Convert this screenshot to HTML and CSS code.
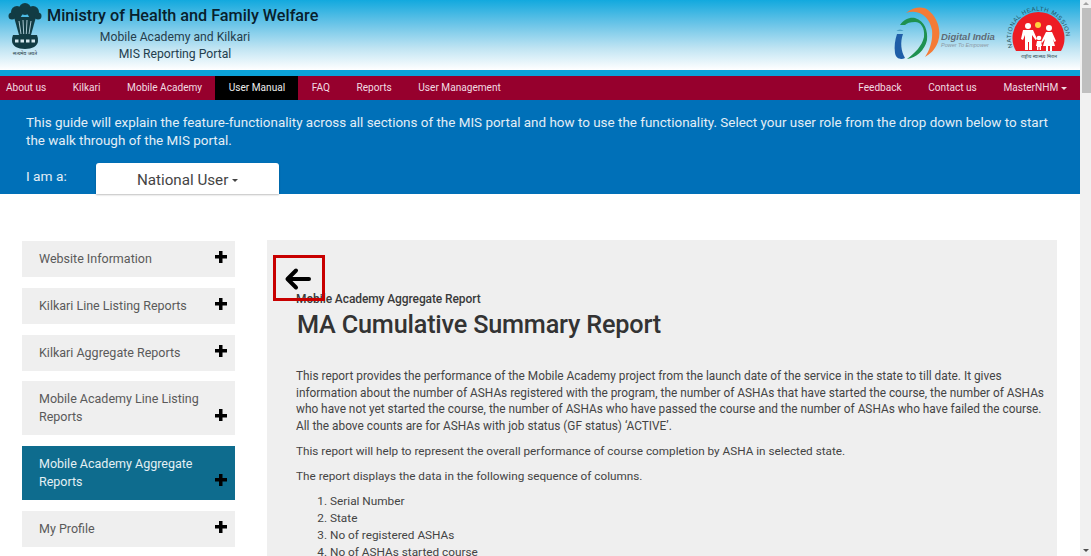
FILE: index.html
```html
<!DOCTYPE html>
<html lang="en">
<head>
<meta charset="utf-8">
<title>MIS Reporting Portal</title>
<link rel="stylesheet" href="styles.css">
</head>
<body>
<div class="page">
  <header class="masthead">
    <div class="brand">
      <svg class="emblem" viewBox="0 0 34 56" width="34" height="56" aria-hidden="true">
        <g fill="#123c44">
          <circle cx="17" cy="7" r="6"/><circle cx="9" cy="10" r="6"/><circle cx="25" cy="10" r="6"/>
          <circle cx="4" cy="14" r="3.500"/><circle cx="30" cy="14" r="3.500"/>
          <path d="M6 15h22l-5 18H11z"/>
          <path d="M5 33h24a13 13 0 0 1 1 6c0 5-6 8-13 8S4 44 4 39a13 13 0 0 1 1-6z"/>
        </g>
        <path d="M11 19l2 13M15 18l.7 14M19 18l-.7 14M23 19l-2 13" stroke="#b8d5df" stroke-width=".9"/>
        <path d="M7 39h20" stroke="#d5e7ee" stroke-width="3" stroke-dasharray="3.500 2"/>
        <text class="emblem-text" x="17" y="53" text-anchor="middle">सत्यमेव जयते</text>
      </svg>
      <div class="titles">
        <h1 class="ministry">Ministry of Health and Family Welfare</h1>
        <p class="sub sub-first">Mobile Academy and Kilkari</p>
        <p class="sub">MIS Reporting Portal</p>
      </div>
    </div>
    <div class="logos">
      <div class="di">
        <svg viewBox="0 0 48 56" width="48" height="56" aria-hidden="true">
          <path d="M14 9C22 3 30 2 36 6c9 7 14 20 10 32-3 8-8 12-13 15 5-7 8-17 7-27C38 14 28 4 14 9z" fill="#f47b36"/>
          <path d="M8 21c4-6 10-8 15-7 10 3 13 13 12 22-2 10-11 18-20 19 8-6 15-13 17-22 1-9-3-15-9-15-5 0-8 1-10 3z" fill="#1e9150"/>
          <path d="M5 30h6c-3 8-2 17 2 24-4 2-9 1-10-5-1-7 0-13 2-19z" fill="#1f5ea8"/>
          <path d="M4.500 27a4 3 0 0 1 7 0z" fill="#4aa0c8"/>
        </svg>
        <div class="di-text"><span class="di-name">Digital India</span><span class="di-tag">Power To Empower</span></div>
      </div>
      <svg class="nhm" viewBox="0 0 70 56" width="70" height="56" role="img">
        <defs><path id="arc" d="M7.900 44.300A27.500 27.500 0 1 1 59.100 44.300"/></defs>
        <text class="nhm-ring"><textPath href="#arc" startOffset="1%">NATIONAL HEALTH MISSION</textPath></text>
        <path d="M11 47A26 26 0 1 1 56 47z" fill="#ed1c24"/>
        <circle cx="33" cy="21" r="3" fill="#ffd23f"/>
        <g fill="#fff">
          <circle cx="23" cy="22" r="3"/><path d="M18 26h10l4 9-1.500 1-3.500-5v15h-3v-8h-1v8h-3V31l-2 5-2-1z"/>
          <circle cx="44" cy="24" r="3"/><path d="M41 28h6l4 9-1.500 1-1.500-3 2 7h-3v5h-2v-5h-2v5h-2v-5h-3l2-7-3 4-1-1z"/>
          <circle cx="34" cy="34" r="2.300"/><path d="M32 37h4l1 5h-1v4h-1.500v-3h-1v3H32v-4h-1z"/>
        </g>
        <text class="nhm-hindi" x="34" y="54" text-anchor="middle">राष्ट्रीय स्वास्थ्य मिशन</text>
      </svg>
    </div>
  </header>
  <nav class="navbar">
    <ul class="nav-group">
      <li class="nav-item">About us</li>
      <li class="nav-item">Kilkari</li>
      <li class="nav-item">Mobile Academy</li>
      <li class="nav-item nav-active">User Manual</li>
      <li class="nav-item">FAQ</li>
      <li class="nav-item">Reports</li>
      <li class="nav-item">User Management</li>
    </ul>
    <ul class="nav-group">
      <li class="nav-item">Feedback</li>
      <li class="nav-item">Contact us</li>
      <li class="nav-item">MasterNHM <span class="caret"></span></li>
    </ul>
  </nav>
  <section class="intro">
    <p class="intro-text">This guide will explain the feature-functionality across all sections of the MIS portal and how to use the functionality. Select your user role from the drop down below to start the walk through of the MIS portal.</p>
    <div class="role">
      <span class="role-label">I am a:</span>
      <button class="role-btn" type="button">National User <span class="caret caret-dark"></span></button>
    </div>
  </section>
  <main class="content">
    <aside class="side">
      <div class="side-item"><span>Website Information</span><b class="plus"></b></div>
      <div class="side-item"><span>Kilkari Line Listing Reports</span><b class="plus"></b></div>
      <div class="side-item"><span>Kilkari Aggregate Reports</span><b class="plus"></b></div>
      <div class="side-item side-two"><span>Mobile Academy Line Listing Reports</span><b class="plus plus-low"></b></div>
      <div class="side-item side-two side-active"><span>Mobile Academy Aggregate Reports</span><b class="plus plus-low"></b></div>
      <div class="side-item"><span>My Profile</span><b class="plus"></b></div>
    </aside>
    <article class="panel">
      <div class="back">
        <svg viewBox="0 0 28 24" width="28" height="24" aria-hidden="true">
          <path d="M25 12H4M12 3.500 3.500 12 12 20.500" fill="none" stroke="#000" stroke-width="4" stroke-linecap="round" stroke-linejoin="round"/>
        </svg>
      </div>
      <div class="eyebrow">Mobile Academy Aggregate Report</div>
      <h2 class="report-title">MA Cumulative Summary Report</h2>
      <p class="para para-first">This report provides the performance of the Mobile Academy project from the launch date of the service in the state to till date. It gives information about the number of ASHAs registered with the program, the number of ASHAs that have started the course, the number of ASHAs who have not yet started the course, the number of ASHAs who have passed the course and the number of ASHAs who have failed the course. All the above counts are for ASHAs with job status (GF status) ‘ACTIVE’.</p>
      <p class="para">This report will help to represent the overall performance of course completion by ASHA in selected state.</p>
      <p class="para para-last">The report displays the data in the following sequence of columns.</p>
      <ol class="cols">
        <li>Serial Number</li>
        <li>State</li>
        <li>No of registered ASHAs</li>
        <li>No of ASHAs started course</li>
      </ol>
    </article>
  </main>
</div>
<div class="scrollbar">
  <span class="sb-arrow sb-up"></span>
  <span class="sb-thumb"></span>
  <span class="sb-arrow sb-down"></span>
</div>
</body>
</html>
```
FILE: styles.css
```css
* { box-sizing: border-box; }
html, body { margin: 0; height: 556px; overflow: hidden; background: #fff; }
body { display: flex; font-family: Roboto, "Liberation Sans", sans-serif; color: #444; }
.page { width: 1080px; flex: none; height: 556px; overflow: hidden; }

.masthead {
  height: 76px;
  border-bottom: 6px solid #0ba3d9;
  background: linear-gradient(to bottom, #12a9de 0%, #6cc5e8 35%, #c2e5f3 70%, #fff 100%);
  display: flex;
  justify-content: space-between;
}
.brand { display: flex; padding: 2px 0 0 8px; }
.emblem { flex: none; }
.emblem-text { font: 5px "Noto Sans", "DejaVu Sans", sans-serif; fill: #24383e; }
.titles { width: 272px; margin-left: 5px; text-align: center; }
.ministry { margin: 4px 0 0; font-size: 16.200px; line-height: 20px; font-weight: 500; color: #07202c; white-space: nowrap; text-align: left; }
.sub { margin: 0; font-size: 12.200px; line-height: 17px; color: #24404e; padding-right: 16px; }
.sub-first { margin-top: 3px; }

.logos { display: flex; align-items: flex-start; }
.di { display: flex; width: 113px; padding-top: 4px; }
.di-text { display: flex; flex-direction: column; margin-top: 27px; margin-left: 1px; white-space: nowrap; }
.di-name { font: italic 700 9.500px/11px "Liberation Sans", sans-serif; color: #5d6a75; }
.di-tag { font: italic 400 5.500px/7px "Liberation Sans", sans-serif; color: #8b98a2; }
.nhm { margin: 4px 5px 0 0; flex: none; }
.nhm-ring { font: 6px "Liberation Sans", sans-serif; letter-spacing: .55px; fill: #24505c; }
.nhm-hindi { font: 5px "Noto Sans", "DejaVu Sans", sans-serif; fill: #304f58; }

.navbar {
  height: 24px;
  background: #96002d;
  display: flex;
  justify-content: space-between;
}
.nav-group { display: flex; list-style: none; margin: 0; padding: 0; }
.nav-item { padding: 0 13.300px; font-size: 10.100px; line-height: 24px; color: #f1dbe1; white-space: nowrap; }
.nav-group:first-child .nav-item:first-child { padding-left: 6px; }
.nav-active { background: #000; color: #ececec; }
.caret { display: inline-block; width: 0; height: 0; border: 3px solid transparent; border-top-color: #f1dbe1; border-bottom: 0; vertical-align: middle; }
.caret-dark { border-top-color: #444; }

.intro { height: 94px; background: #0070b8; padding: 14px 26px 0; color: #e3eef6; }
.intro-text { margin: 0; font-size: 13.450px; line-height: 18px; width: 1030px; }
.role { display: flex; align-items: flex-start; margin-top: 13px; }
.role-label { font-size: 13.700px; line-height: 20px; margin-top: 3px; width: 70px; }
.role-btn {
  width: 183px;
  height: 31px;
  padding-top: 3px;
  border: 0;
  background: #fff;
  border-radius: 3px 3px 0 0;
  box-shadow: 0 1px 2px rgba(0, 0, 0, .25);
  font-family: inherit;
  font-size: 15.200px;
  color: #444;
}

.content { display: flex; padding: 46px 23px 0 22px; }
.side { width: 213px; flex: none; margin-right: 32px; padding-top: 1px; }
.side-item {
  position: relative;
  background: #efefef;
  padding: 9px 34px 9px 17px;
  min-height: 36px;
  margin-bottom: 10.800px;
  font-size: 12.500px;
  line-height: 18px;
  color: #5a5a5a;
}
.side-two { height: 54px; }
.side-active { background: #0e6c8e; color: #e4f0f4; }
.plus { position: absolute; right: 8px; top: 10px; width: 12px; height: 12px; background: linear-gradient(#000, #000) center / 12px 3.500px no-repeat, linear-gradient(#000, #000) center / 3.500px 12px no-repeat; }
.plus-low { top: 28px; }

.panel { position: relative; flex: 1; background: #efefef; height: 400px; padding: 52px 12px 0 29px; }
.back {
  position: absolute;
  left: 6px;
  top: 15px;
  width: 52px;
  height: 46px;
  border: 3px solid #c80000;
  padding: 9px 0 0 8px;
  line-height: 0;
}
.eyebrow { font-size: 12px; line-height: 14px; color: #3a3a3a; font-weight: 500; letter-spacing: -.1px; }
.report-title { margin: 3px 0 0 1px; font-size: 25.250px; line-height: 32px; font-weight: 500; color: #333; letter-spacing: -.2px; }
.para { margin: 0 0 8.500px; font-size: 11.750px; line-height: 16.600px; color: #444; }
.para-first { margin-top: 27px; margin-bottom: 9px; font-size: 11.850px; }
.para-last { margin-bottom: 7.500px; }
.cols { margin: 0; padding: 0 0 0 34px; font-size: 11.800px; line-height: 17px; color: #444; }

.scrollbar { width: 11px; flex: none; height: 556px; background: #f1f1f1; display: flex; flex-direction: column; }
.sb-arrow { flex: none; position: relative; }
.sb-up { height: 8px; }
.sb-down { height: 10px; }
.sb-arrow::after { content: ""; position: absolute; left: 3px; width: 0; height: 0; border-left: 3px solid transparent; border-right: 3px solid transparent; }
.sb-up::after { top: 2px; border-bottom: 3px solid #a3a3a3; }
.sb-down::after { top: 3px; border-top: 3px solid #505050; }
.sb-thumb { height: 85px; background: #bfbfbf; margin-left: 2px; margin-bottom: auto; }
```
